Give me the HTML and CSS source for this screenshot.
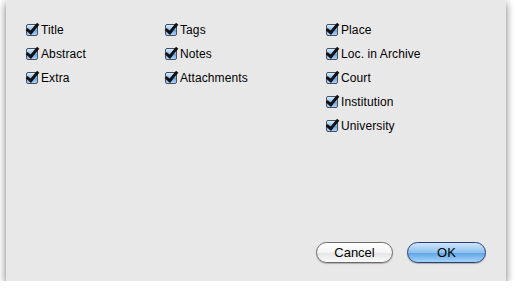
FILE: index.html
```html
<!DOCTYPE html>
<html lang="en">
<head>
    <meta charset="UTF-8">
    <title>Fields</title>
    <link rel="stylesheet" href="styles.css">
</head>
<body>
    <div class="dialog">
        <div class="fields">
            <div class="col col1">
                <label class="check"><span class="box"></span>Title</label>
                <label class="check"><span class="box"></span>Abstract</label>
                <label class="check"><span class="box"></span>Extra</label>
            </div>
            <div class="col col2">
                <label class="check"><span class="box"></span>Tags</label>
                <label class="check"><span class="box"></span>Notes</label>
                <label class="check"><span class="box"></span>Attachments</label>
            </div>
            <div class="col col3">
                <label class="check"><span class="box"></span>Place</label>
                <label class="check"><span class="box"></span>Loc. in Archive</label>
                <label class="check"><span class="box"></span>Court</label>
                <label class="check"><span class="box"></span>Institution</label>
                <label class="check"><span class="box"></span>University</label>
            </div>
        </div>
        <div class="buttons">
            <button class="btn">Cancel</button>
            <button class="btn default">OK</button>
        </div>
    </div>
</body>
</html>
```

FILE: styles.css
```css
*{
    margin: 0;
    padding: 0;
    box-sizing: border-box;
}
body{
    background: #ffffff;
    font-family: "Liberation Sans", Arial, sans-serif;
    font-size: 12px;
    color: #000;
}
.dialog{
    width: 500px;
    height: 281px;
    margin-left: 6px;
    background: #e8e8e8;
    box-shadow: 0 3px 8px rgba(0,0,0,0.55);
    display: flex;
    flex-direction: column;
    justify-content: space-between;
    padding: 23px 0 18px 20px;
}
.fields{
    display: flex;
}
.col{
    display: flex;
    flex-direction: column;
    gap: 11px;
}
.col1{
    width: 139px;
}
.col2{
    width: 161px;
}
.check{
    display: flex;
    align-items: center;
    height: 13px;
    gap: 3px;
    letter-spacing: 0.1px;
}
.box{
    position: relative;
    width: 12px;
    height: 12px;
    border: 1px solid #4a4f5a;
    border-radius: 2px;
    background: linear-gradient(#d6ecff, #8cc3f2 50%, #5ea4e8 51%, #a8d6ff);
}
.box::after{
    content: "";
    position: absolute;
    left: 2px;
    top: -4px;
    width: 4px;
    height: 10px;
    border: solid #111;
    border-width: 0 3px 3px 0;
    transform: rotate(40deg);
}
.buttons{
    display: flex;
    justify-content: flex-end;
    gap: 14px;
    padding-right: 20px;
}
.btn{
    width: 77px;
    height: 21px;
    border-radius: 11px;
    border: 1px solid #6b6b6b;
    background: linear-gradient(#ffffff, #f4f4f4 50%, #e4e4e4 51%, #fafafa);
    font-family: "Liberation Sans", Arial, sans-serif;
    font-size: 13px;
    color: #000;
    box-shadow: 0 1px 1px rgba(0,0,0,0.25);
}
.btn.default{
    width: 79px;
    border-color: #2b3f73;
    background: linear-gradient(#cfe6fb, #8ec2f0 50%, #5ea2e6 51%, #a4d4fb);
}
```
